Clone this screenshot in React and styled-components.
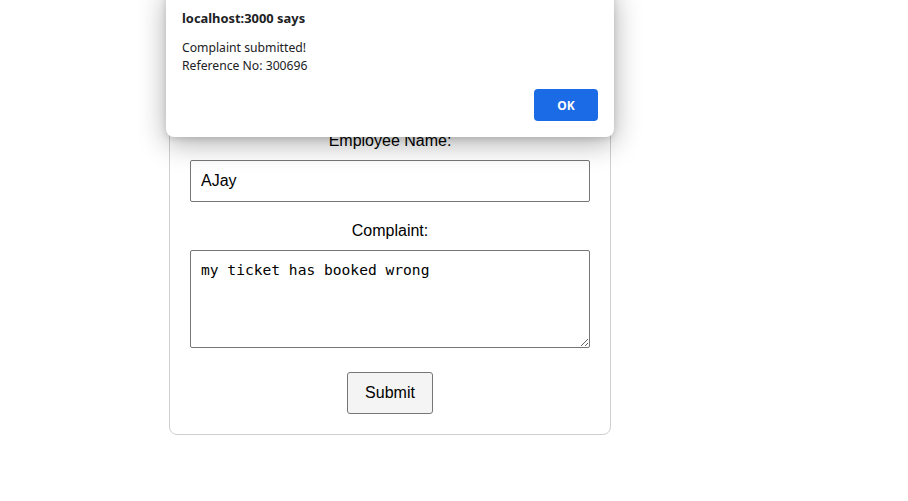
import React from "react";
import styled, { createGlobalStyle } from "styled-components";

const Global = createGlobalStyle`
  html, body { margin: 0; padding: 0; background: #fff; }
  body { font-family: "Liberation Sans", Arial, sans-serif; }
`;

const Page = styled.div`
  position: relative;
  width: 908px;
  height: 501px;
  overflow: hidden;
  padding-left: 169px;
  padding-top: 40px;
  box-sizing: border-box;
`;

const Card = styled.div`
  width: 442px;
  box-sizing: border-box;
  border: 1px solid #cfcfcf;
  border-radius: 8px;
  padding: 20px;
  display: flex;
  flex-direction: column;
`;

const Title = styled.h2`
  margin: 0 0 40px;
  font-size: 22px;
  line-height: 30px;
  text-align: center;
  color: #222;
`;

const Label = styled.label`
  display: block;
  text-align: center;
  font-size: 16px;
  line-height: 20px;
  color: #000;
  margin-top: ${(p) => p.$top || 0}px;
  margin-bottom: 9px;
`;

const Input = styled.input`
  display: block;
  width: 400px;
  height: 42px;
  box-sizing: border-box;
  border: 1px solid #767676;
  border-radius: 2px;
  padding: 0 10px;
  font-family: "Liberation Sans", Arial, sans-serif;
  font-size: 16px;
  color: #000;
  outline: none;
`;

const TextArea = styled.textarea`
  display: block;
  width: 400px;
  height: 98px;
  box-sizing: border-box;
  border: 1px solid #767676;
  border-radius: 2px;
  padding: 10px 10px;
  font-family: "DejaVu Sans Mono", "Liberation Mono", monospace;
  font-size: 14.6px;
  line-height: 18px;
  color: #000;
  resize: both;
  outline: none;
`;

const SubmitButton = styled.button`
  align-self: center;
  margin-top: 24px;
  width: 86px;
  height: 42px;
  box-sizing: border-box;
  background: #f4f4f4;
  border: 1px solid #767676;
  border-radius: 3px;
  font-family: "Liberation Sans", Arial, sans-serif;
  font-size: 16px;
  color: #000;
  padding: 0;
`;

const Dialog = styled.div`
  position: absolute;
  left: 166px;
  top: -12px;
  width: 448px;
  height: 149px;
  box-sizing: border-box;
  background: #fff;
  border-radius: 8px;
  box-shadow: 0 6px 28px rgba(0, 0, 0, 0.32), 0 2px 6px rgba(0, 0, 0, 0.12);
  padding: 22px 16px 0 16px;
  display: flex;
  flex-direction: column;
  font-family: "Noto Sans", "Open Sans", sans-serif;
  color: #202124;
`;

const DialogTitle = styled.div`
  font-weight: 700;
  font-size: 12.9px;
  line-height: 17px;
`;

const DialogBody = styled.div`
  margin-top: 12px;
  display: flex;
  flex-direction: column;
`;

const DialogLine = styled.div`
  font-size: 12.2px;
  line-height: 18px;
`;

const DialogActions = styled.div`
  display: flex;
  justify-content: flex-end;
  margin-top: 14px;
`;

const OkButton = styled.button`
  width: 64px;
  height: 32px;
  border: none;
  border-radius: 4px;
  background: #1b6ae6;
  color: #fff;
  font-family: "Noto Sans", "Open Sans", sans-serif;
  font-weight: 700;
  font-size: 12px;
  padding: 0;
`;

export default function App() {
  return (
    <>
      <Global />
      <Page>
        <Card>
          <Title>Employee Complaint Form</Title>
          <Label>Employee Name:</Label>
          <Input defaultValue="AJay" />
          <Label $top={19}>Complaint:</Label>
          <TextArea defaultValue="my ticket has booked wrong" />
          <SubmitButton>Submit</SubmitButton>
        </Card>
        <Dialog>
          <DialogTitle>localhost:3000 says</DialogTitle>
          <DialogBody>
            <DialogLine>Complaint submitted!</DialogLine>
            <DialogLine>Reference No: 300696</DialogLine>
          </DialogBody>
          <DialogActions>
            <OkButton>OK</OkButton>
          </DialogActions>
        </Dialog>
      </Page>
    </>
  );
}
